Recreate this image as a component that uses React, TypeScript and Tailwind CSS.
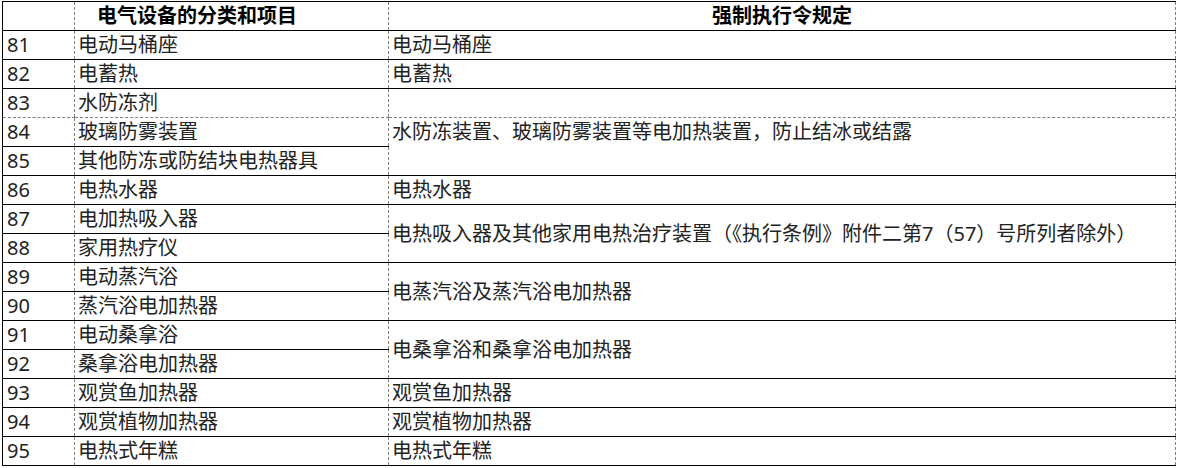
type RuleCell = { text: string; span: number };

interface Row {
  no: number;
  item: string;
  rule?: RuleCell;
}

const rows: Row[] = [
  { no: 81, item: "电动马桶座", rule: { text: "电动马桶座", span: 1 } },
  { no: 82, item: "电蓄热", rule: { text: "电蓄热", span: 1 } },
  {
    no: 83,
    item: "水防冻剂",
    rule: { text: "水防冻装置、玻璃防雾装置等电加热装置，防止结冰或结露", span: 3 },
  },
  { no: 84, item: "玻璃防雾装置" },
  { no: 85, item: "其他防冻或防结块电热器具" },
  { no: 86, item: "电热水器", rule: { text: "电热水器", span: 1 } },
  {
    no: 87,
    item: "电加热吸入器",
    rule: {
      text: "电热吸入器及其他家用电热治疗装置（《执行条例》附件二第7（57）号所列者除外）",
      span: 2,
    },
  },
  { no: 88, item: "家用热疗仪" },
  { no: 89, item: "电动蒸汽浴", rule: { text: "电蒸汽浴及蒸汽浴电加热器", span: 2 } },
  { no: 90, item: "蒸汽浴电加热器" },
  { no: 91, item: "电动桑拿浴", rule: { text: "电桑拿浴和桑拿浴电加热器", span: 2 } },
  { no: 92, item: "桑拿浴电加热器" },
  { no: 93, item: "观赏鱼加热器", rule: { text: "观赏鱼加热器", span: 1 } },
  { no: 94, item: "观赏植物加热器", rule: { text: "观赏植物加热器", span: 1 } },
  { no: 95, item: "电热式年糕", rule: { text: "电热式年糕", span: 1 } },
];

const spanClass: Record<number, string> = {
  1: "row-span-1",
  2: "row-span-2",
  3: "row-span-3",
};

// page break row: the bottom line under 83 is the dashed print line
const PAGE_BREAK_NO = 83;

const Cell = ({
  children,
  dashedBottom,
  className = "",
}: {
  children?: React.ReactNode;
  dashedBottom?: boolean;
  className?: string;
}) => (
  <div
    className={
      "border-b " +
      (dashedBottom ? "border-dashed border-[#808080] " : "border-black ") +
      className
    }
  >
    <div className="h-full flex items-center border-r border-dashed border-[#808080] pl-[3px] whitespace-nowrap">
      {children}
    </div>
  </div>
);

export default function App() {
  return (
    <div className="bg-white w-[1178px] h-[468px] overflow-hidden text-[20px] leading-[28px] text-[#222] font-['Noto_Sans','Noto_Sans_CJK_SC',sans-serif]">
      <div className="ml-[2px] mt-[1px] w-[1174px] border-l border-t border-black grid grid-cols-[72px_314px_787px] auto-rows-[29px]">
        <Cell />
        <Cell>
          <span className="pl-[19px] font-bold text-black">电气设备的分类和项目</span>
        </Cell>
        <div className="border-b border-black">
          <div className="h-full flex items-center justify-center border-r border-dashed border-[#808080] font-bold text-black">
            强制执行令规定
          </div>
        </div>

        {rows.map((row) => {
          const dashed = row.no === PAGE_BREAK_NO;
          return [
            <Cell key={row.no + "-n"} dashedBottom={dashed}>
              <span className="pl-[1px]">{row.no}</span>
            </Cell>,
            <Cell key={row.no + "-i"} dashedBottom={dashed}>
              {row.item}
            </Cell>,
            row.rule ? (
              <div
                key={row.no + "-r"}
                className={"border-b border-black " + spanClass[row.rule.span]}
              >
                <div className="relative h-full flex items-center border-r border-dashed border-[#808080] pl-[3px] whitespace-nowrap">
                  {row.no === PAGE_BREAK_NO && (
                    <div className="absolute left-0 right-0 top-[28px] border-t border-dashed border-[#808080]" />
                  )}
                  {row.no === PAGE_BREAK_NO ? (
                    <span className="relative">{row.rule.text}</span>
                  ) : (
                    row.rule.text
                  )}
                </div>
              </div>
            ) : null,
          ];
        })}
      </div>
    </div>
  );
}
